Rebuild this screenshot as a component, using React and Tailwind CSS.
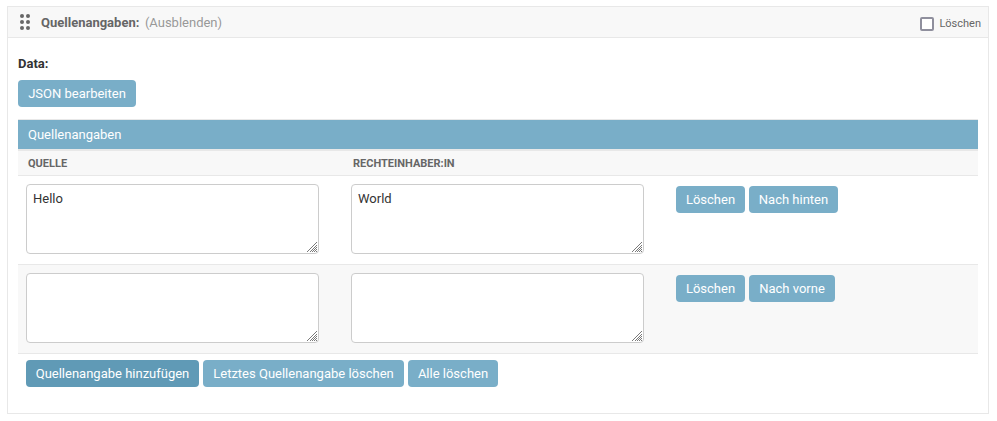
import React from "react";
import clsx from "clsx";

function Button({ children, className, dark }) {
  return (
    <button
      type="button"
      className={clsx(
        "h-[27px] shrink-0 whitespace-nowrap rounded text-center text-[13px] leading-[27px] text-white",
        dark ? "bg-[#609ab6]" : "bg-[#79aec8]",
        className
      )}
    >
      {children}
    </button>
  );
}

function Grip() {
  return (
    <svg
      className="pointer-events-none absolute bottom-[2px] right-[2px]"
      width="10"
      height="10"
      viewBox="0 0 10 10"
      stroke="#6b6b6b"
      strokeWidth="0.9"
      fill="none"
    >
      <path d="M0 10L10 0M3 10L10 3M5 10L10 5M7 10L10 7M9 10L10 9" />
    </svg>
  );
}

function Field({ value, label }) {
  return (
    <div className="relative h-[70px] w-[293px] shrink-0">
      <textarea
        aria-label={label}
        defaultValue={value}
        spellCheck={false}
        className="block h-full w-full resize-none rounded border border-[#ccc] bg-white px-1.5 py-[5px] text-[13px] leading-[17px] text-[#333] outline-none"
      />
      <Grip />
    </div>
  );
}

function Row({ source, owner, action, actionClass, shaded }) {
  return (
    <div
      className={clsx(
        "flex h-[89px] gap-8 border-b border-[#e8e8e8] px-2 pt-2",
        shaded && "bg-[#f8f8f8]"
      )}
    >
      <Field value={source} label="Quelle" />
      <Field value={owner} label="Rechteinhaber:in" />
      <div className="flex gap-1 pt-0.5">
        <Button className="w-[69px]">Löschen</Button>
        <Button className={actionClass}>{action}</Button>
      </div>
    </div>
  );
}

function DragHandle() {
  return (
    <svg width="12" height="18" viewBox="0 0 12 18" fill="#666" className="shrink-0">
      <circle cx="3" cy="3" r="2" />
      <circle cx="9" cy="3" r="2" />
      <circle cx="3" cy="9" r="2" />
      <circle cx="9" cy="9" r="2" />
      <circle cx="3" cy="15" r="2" />
      <circle cx="9" cy="15" r="2" />
    </svg>
  );
}

export default function App() {
  return (
    <div className="h-[421px] w-[997px] bg-white pl-[7px] pt-1.5 font-['Roboto',sans-serif] text-[13px] text-[#333]">
      <section className="h-[408px] w-[982px] border border-[#e8e8e8]">
        <header className="flex h-[31px] items-center border-b border-[#e8e8e8] bg-[#f8f8f8] pl-[11px] pr-[7px]">
          <DragHandle />
          <h3 className="ml-[10px] pt-0.5 font-bold text-[#666]">Quellenangaben:</h3>
          <span className="ml-[5.5px] pt-0.5 text-[#999]">(Ausblenden)</span>
          <label className="ml-auto flex h-[30px] items-start gap-[5px] text-[11px] text-[#666]">
            <span className="mt-[10px] h-[14px] w-[14px] rounded-[2px] border-2 border-[#8f8f9d] bg-white" />
            <span className="pt-[9px] leading-[15px]">Löschen</span>
          </label>
        </header>
        <div className="px-2.5 pt-[17px]">
          <div className="h-[25px] font-bold leading-[17px]">Data:</div>
          <Button className="block w-[118px]">JSON bearbeiten</Button>
          <div className="mt-3 border-t border-[#e8e8e8]">
            <h2 className="h-[29px] bg-[#79aec8] px-2.5 leading-[29px] text-white">Quellenangaben</h2>
            <div className="flex h-[27px] border-b border-t-2 border-[#e8e8e8] bg-[#f8f8f8] px-2.5 text-[11px] font-bold uppercase leading-[26px] text-[#666]">
              <div className="w-[325px]">Quelle</div>
              <div>Rechteinhaber:in</div>
            </div>
            <Row source="Hello" owner="World" action="Nach hinten" actionClass="w-[89px]" />
            <Row source="" owner="" action="Nach vorne" actionClass="w-[86px]" shaded />
          </div>
          <div className="flex gap-1 px-2 pt-1.5">
            <Button className="w-[173px]" dark>Quellenangabe hinzufügen</Button>
            <Button className="w-[201px]">Letztes Quellenangabe löschen</Button>
            <Button className="w-[90px]">Alle löschen</Button>
          </div>
        </div>
      </section>
    </div>
  );
}
